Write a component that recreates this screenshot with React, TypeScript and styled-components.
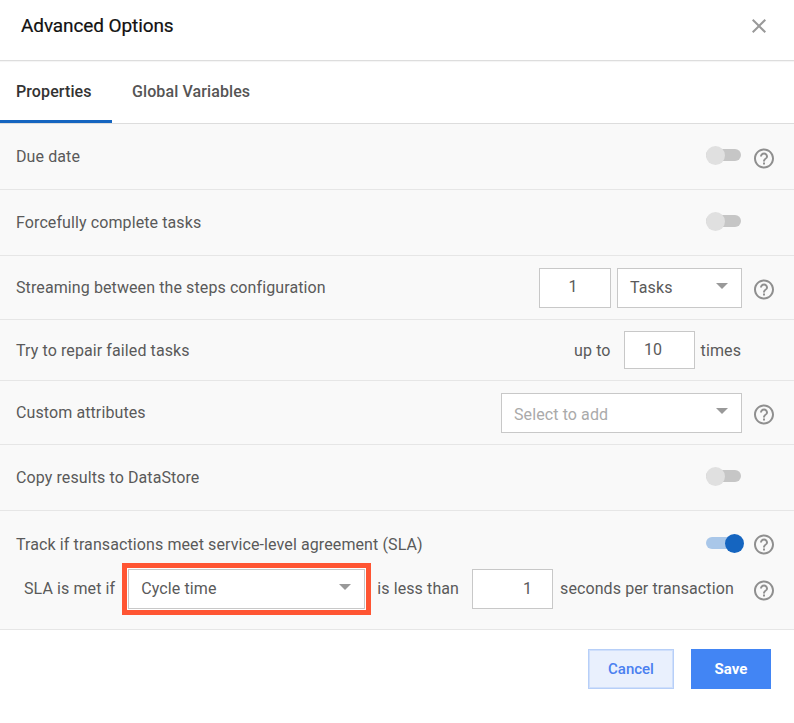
import React from "react";
import styled, { createGlobalStyle } from "styled-components";

const Global = createGlobalStyle`
  html, body { margin: 0; padding: 0; background: #fff; }
  body { font-family: Roboto, "Liberation Sans", sans-serif; }
  * { box-sizing: border-box; }
`;

const Dialog = styled.div`
  width: 794px;
  height: 723px;
  background: #fff;
  display: flex;
  flex-direction: column;
  color: #5a5a5a;
`;

const Header = styled.header`
  height: 61px;
  flex: none;
  display: flex;
  align-items: center;
  justify-content: space-between;
  padding: 0 23px 9px 21px;
  border-bottom: 1px solid #ddd;
  box-shadow: 0 1px 1px rgba(0, 0, 0, 0.04);
`;

const Title = styled.h1`
  margin: 0;
  font-size: 19px;
  font-weight: 400;
  color: #111;
  letter-spacing: -0.1px;
  -webkit-text-stroke: 0.2px #111;
`;

const CloseBtn = styled.svg`
  width: 24px;
  height: 24px;
  fill: #999;
  display: block;
`;

const Tabs = styled.nav`
  height: 63px;
  flex: none;
  display: flex;
  border-bottom: 1px solid #ddd;
`;

const Tab = styled.div<{ $active?: boolean; $width: number; $pad: number }>`
  width: ${(p) => p.$width}px;
  padding-left: ${(p) => p.$pad}px;
  height: 62px;
  padding-top: 21px;
  line-height: 20px;
  font-size: 16px;
  font-weight: 500;
  letter-spacing: 0.1px;
  color: ${(p) => (p.$active ? "#333" : "#555")};
  border-bottom: 3px solid ${(p) => (p.$active ? "#1565c0" : "transparent")};
`;

const Body = styled.section`
  background: #f9f9f9;
  flex: none;
`;

const Row = styled.div<{ $h: number }>`
  height: ${(p) => p.$h}px;
  display: flex;
  align-items: center;
  padding: 0 18px 0 16px;
  border-bottom: 1px solid #e6e6e6;
`;

const SlaRow = styled.div`
  height: 119px;
  padding: 6px 18px 0 16px;
  border-bottom: 1px solid #e6e6e6;
  display: flex;
  flex-direction: column;
`;

const SlaTop = styled.div`
  height: 52px;
  display: flex;
  align-items: center;
`;

const SlaBottom = styled.div`
  display: flex;
  align-items: center;
  height: 40px;
  padding-left: 8px;
`;

const Label = styled.span<{ $down?: number }>`
  font-size: 16px;
  letter-spacing: 0.1px;
  color: #5a5a5a;
  line-height: 20px;
  flex: 1;
  padding-top: ${(p) => p.$down ?? 0}px;
`;

const Text = styled.span<{ $gapL?: number; $gapR?: number; $down?: number }>`
  font-size: 16px;
  letter-spacing: 0.1px;
  color: #5a5a5a;
  line-height: 20px;
  margin-left: ${(p) => p.$gapL ?? 0}px;
  margin-right: ${(p) => p.$gapR ?? 0}px;
  padding-top: ${(p) => p.$down ?? 0}px;
  white-space: nowrap;
`;

const Controls = styled.div`
  display: flex;
  align-items: center;
  gap: 6px;
`;

const NumberBox = styled.div<{ $w: number; $h?: number; $right?: boolean; $shift?: number }>`
  width: ${(p) => p.$w}px;
  height: ${(p) => p.$h ?? 40}px;
  background: #fff;
  border: 1px solid #c8c8c8;
  font-size: 16px;
  letter-spacing: 0.1px;
  color: #5a5a5a;
  display: flex;
  align-items: center;
  justify-content: ${(p) => (p.$right ? "flex-end" : "center")};
  padding: 0 ${(p) => (p.$right ? 20 : p.$shift ?? 2)}px 2px 0;
`;

const Select = styled.div<{ $w: number; $placeholder?: boolean }>`
  position: relative;
  width: ${(p) => p.$w}px;
  height: 40px;
  background: #fff;
  border: 1px solid #c8c8c8;
  font-size: 16px;
  letter-spacing: 0.1px;
  color: ${(p) => (p.$placeholder ? "#aaa" : "#5a5a5a")};
  display: flex;
  align-items: center;
  padding-left: 12px;
  padding-top: ${(p) => (p.$placeholder ? "3px" : "0")};
  padding-bottom: ${(p) => (p.$placeholder ? "0" : "1px")};
  &::after {
    content: "";
    position: absolute;
    right: 13px;
    top: 14px;
    border-left: 6px solid transparent;
    border-right: 6px solid transparent;
    border-top: 6px solid #999;
  }
`;

const Highlight = styled.div`
  border: 5px solid #ff5533;
  padding: 1px;
  background: #fff;
  margin-left: 7px;
  margin-right: 6px;
  display: flex;
`;

const HelpSlot = styled.div<{ $auto?: boolean }>`
  width: 24px;
  height: 24px;
  margin-left: ${(p) => (p.$auto ? "auto" : "10px")};
  flex: none;
  transform: translateY(1.5px);
`;

const HelpSvg = styled.svg`
  width: 24px;
  height: 24px;
  fill: #8f8f8f;
  display: block;
`;

const Track = styled.div<{ $on?: boolean }>`
  position: relative;
  width: 35px;
  height: 12px;
  border-radius: 6px;
  margin: ${(p) => (p.$on ? "0" : "-3px")} 1px 0 0;
  background: ${(p) => (p.$on ? "#a9c7e9" : "#c6c6c6")};
`;

const Knob = styled.div<{ $on?: boolean }>`
  position: absolute;
  top: -3.5px;
  width: 19px;
  height: 19px;
  border-radius: 50%;
  left: ${(p) => (p.$on ? "19px" : "0")};
  background: ${(p) => (p.$on ? "#1565c0" : "#e0e0e0")};
`;

const Footer = styled.footer`
  display: flex;
  justify-content: flex-end;
  gap: 17px;
  padding: 19px 23px 0 0;
`;

const Cancel = styled.button`
  width: 86px;
  height: 40px;
  background: #e9f0fd;
  border: 1px solid #b7cff8;
  box-shadow: inset 0 0 0 1px #cfdffb;
  color: #4a80f0;
  font: 500 15px Roboto, sans-serif;
  padding: 0;
`;

const Save = styled.button`
  width: 80px;
  height: 40px;
  background: #4285f4;
  border: none;
  color: #fff;
  font: 700 15px Roboto, sans-serif;
  padding: 0;
`;

const Help = () => (
  <HelpSvg viewBox="0 0 24 24">
    <path d="M11 18h2v-2h-2v2zm1-16C6.48 2 2 6.48 2 12s4.48 10 10 10 10-4.48 10-10S17.52 2 12 2zm0 18c-4.41 0-8-3.59-8-8s3.59-8 8-8 8 3.59 8 8-3.59 8-8 8zm0-14c-2.21 0-4 1.79-4 4h2c0-1.1.9-2 2-2s2 .9 2 2c0 2-3 1.75-3 5h2c0-2.25 3-2.5 3-5 0-2.21-1.79-4-4-4z" />
  </HelpSvg>
);

const Toggle = ({ on }: { on?: boolean }) => (
  <Track $on={on}>
    <Knob $on={on} />
  </Track>
);

export default function App() {
  return (
    <Dialog>
      <Global />
      <Header>
        <Title>Advanced Options</Title>
        <CloseBtn viewBox="0 0 24 24">
          <path d="M19 6.41 17.59 5 12 10.59 6.41 5 5 6.41 10.59 12 5 17.59 6.41 19 12 13.41 17.59 19 19 17.59 13.41 12z" />
        </CloseBtn>
      </Header>
      <Tabs>
        <Tab $active $width={112} $pad={16}>Properties</Tab>
        <Tab $width={200} $pad={20}>Global Variables</Tab>
      </Tabs>
      <Body>
        <Row $h={66}>
          <Label>Due date</Label>
          <Toggle />
          <HelpSlot><Help /></HelpSlot>
        </Row>
        <Row $h={66}>
          <Label>Forcefully complete tasks</Label>
          <Toggle />
          <HelpSlot />
        </Row>
        <Row $h={64}>
          <Label>Streaming between the steps configuration</Label>
          <Controls>
            <NumberBox $w={72} $shift={4}>1</NumberBox>
            <Select $w={125}>Tasks</Select>
          </Controls>
          <HelpSlot><Help /></HelpSlot>
        </Row>
        <Row $h={61}>
          <Label $down={2}>Try to repair failed tasks</Label>
          <Controls>
            <Text $gapR={7} $down={1}>up to</Text>
            <NumberBox $w={71} $h={38} $shift={12}>10</NumberBox>
            <Text $gapR={1} $down={1}>times</Text>
          </Controls>
          <HelpSlot />
        </Row>
        <Row $h={64}>
          <Label>Custom attributes</Label>
          <Select $w={241} $placeholder>Select to add</Select>
          <HelpSlot><Help /></HelpSlot>
        </Row>
        <Row $h={66}>
          <Label>Copy results to DataStore</Label>
          <Toggle />
          <HelpSlot />
        </Row>
        <SlaRow>
          <SlaTop>
            <Label $down={3}>Track if transactions meet service-level agreement (SLA)</Label>
            <Toggle on />
            <HelpSlot><Help /></HelpSlot>
          </SlaTop>
          <SlaBottom>
            <Text>SLA is met if</Text>
            <Highlight>
              <Select $w={237}>Cycle time</Select>
            </Highlight>
            <Text $gapR={13}>is less than</Text>
            <NumberBox $w={81} $right>1</NumberBox>
            <Text $gapL={7}>seconds per transaction</Text>
            <HelpSlot $auto><Help /></HelpSlot>
          </SlaBottom>
        </SlaRow>
      </Body>
      <Footer>
        <Cancel>Cancel</Cancel>
        <Save>Save</Save>
      </Footer>
    </Dialog>
  );
}
